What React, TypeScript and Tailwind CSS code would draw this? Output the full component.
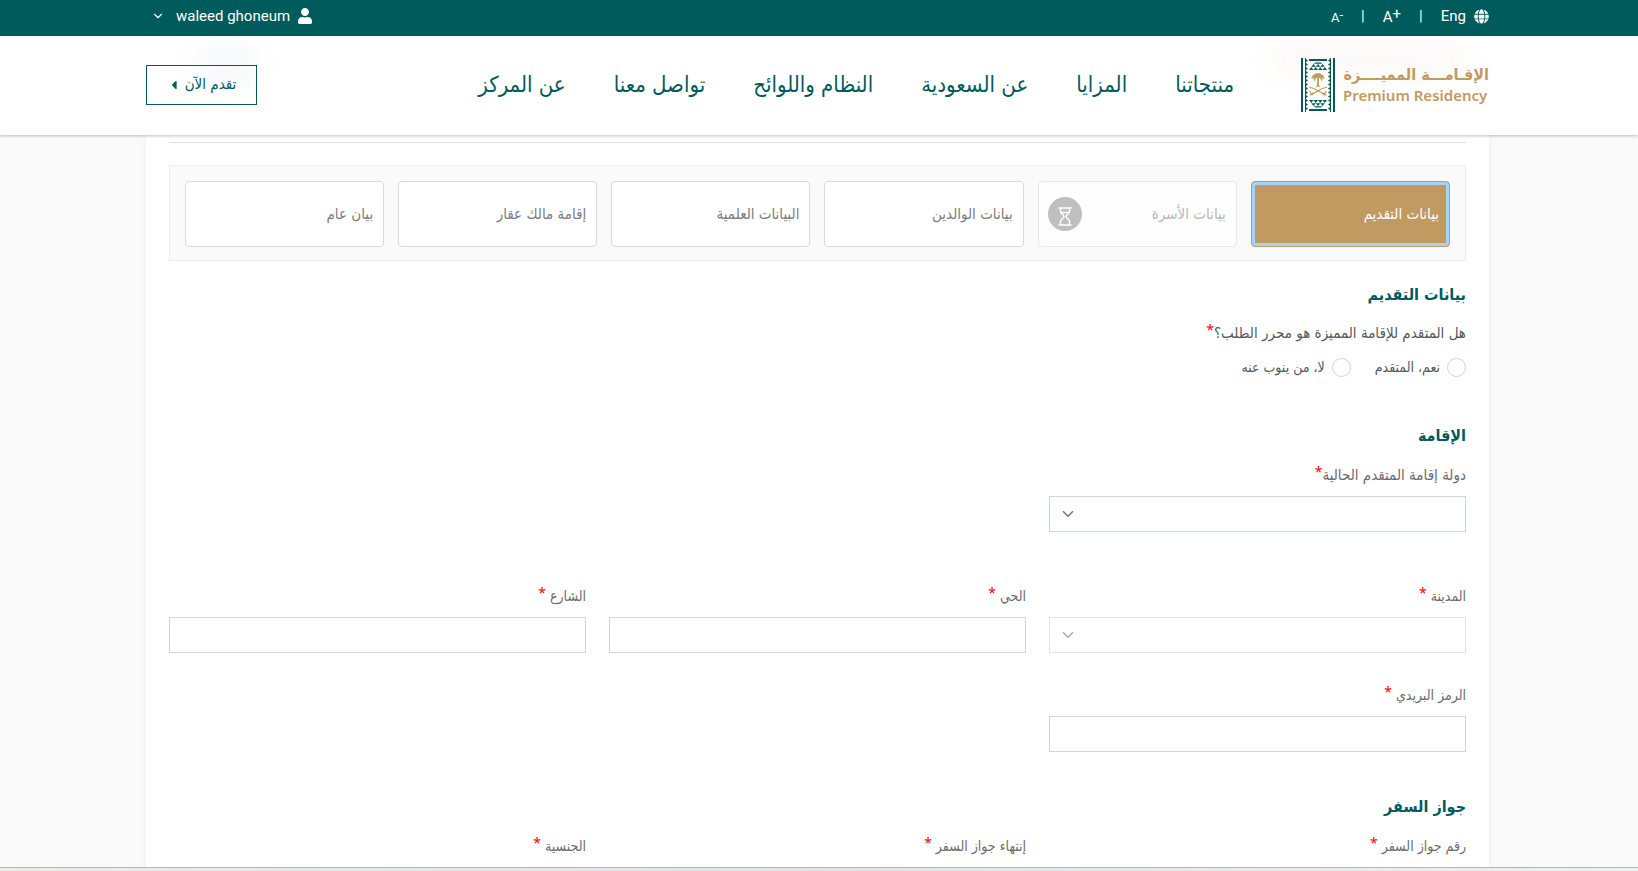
import React from "react";
import { ChevronDown } from "lucide-react";
import { FaGlobe, FaUser, FaCaretLeft } from "react-icons/fa";

const navLinks = [
  "منتجاتنا",
  "المزايا",
  "عن السعودية",
  "النظام واللوائح",
  "تواصل معنا",
  "عن المركز",
];

const steps = [
  { title: "بيانات التقديم", state: "active" },
  { title: "بيانات الأسرة", state: "pending" },
  { title: "بيانات الوالدين", state: "idle" },
  { title: "البيانات العلمية", state: "idle" },
  { title: "إقامة مالك عقار", state: "idle" },
  { title: "بيان عام", state: "idle" },
];

const stepStyles: Record<string, string> = {
  active:
    "border-[#c19a62] bg-[#c19a62] text-white shadow-[inset_0_0_0_3px_#a5d3f7]",
  pending: "border-[#e8e8e8] bg-[#fdfdfd] text-[#b8b8b8]",
  idle: "border-[#dadada] bg-white text-[#7c7c7c]",
};

const teeth = Array.from({ length: 13 }, (_, i) => 1 + i * 4);

function Triangles() {
  return (
    <path d="M8 12l2.3-3 2.2 3zM12.5 12l2.2-3 2.3 3zM17 12l2.3-3 2.2 3zM21.5 12l2.3-3 2.2 3zM10.3 8.8l2.2-2.8 2.3 2.8zM14.8 8.8l2.2-2.8 2.3 2.8zM19.3 8.8l2.2-2.8 2.3 2.8zM12.5 5.8l2-1.3h5l2 1.3z" />
  );
}

function Emblem() {
  return (
    <svg width="34" height="54" viewBox="0 0 34 54" aria-hidden="true">
      <g fill="#005b5c">
        <rect x="0" y="0" width="2" height="54" />
        <rect x="32" y="0" width="2" height="54" />
        <rect x="4" y="0" width="1" height="54" />
        <rect x="29" y="0" width="1" height="54" />
        {teeth.map((y) => (
          <React.Fragment key={y}>
            <path d={`M5 ${y}l2 1.5l-2 1.5z`} />
            <path d={`M29 ${y}l-2 1.5l2 1.5z`} />
          </React.Fragment>
        ))}
        <rect x="8" y="1" width="18" height="2" />
        <rect x="8" y="51" width="18" height="2" />
        <Triangles />
        <g transform="matrix(1 0 0 -1 0 54)">
          <Triangles />
        </g>
      </g>
      {/* palm over crossed swords */}
      <path
        fill="#c19a62"
        d="M17 15.500c1.500-.8 3 0 3.400 1 1.300 0 2.300 1 2.200 2 .9.600 1.100 2 .2 3.200 0-1.200-.7-1.900-1.400-2.100.3 1.500-.2 3-1.400 4 .2-1.700-.4-3-1.400-3.800l-.7 0v8h1.100v1h-4v-1h1.100v-8l-.7 0c-1 .8-1.600 2.100-1.400 3.800-1.200-1-1.700-2.500-1.400-4-.7.200-1.400.9-1.400 2.100-.9-1.200-.7-2.600.2-3.200-.1-1 .9-2 2.200-2 .4-1 1.900-1.800 3.400-1z"
      />
      <g stroke="#c19a62" fill="none" strokeLinecap="round" strokeWidth="1.200">
        <path d="M8.500 29.500c5 .3 9 3 14.500 7M25.500 29.500c-5 .3-9 3-14.500 7" />
        <path d="M9 33.500l2 3.500M25 33.500l-2 3.500M9 37l3-2M25 37l-3-2" />
      </g>
    </svg>
  );
}

function Hourglass() {
  return (
    <svg
      width="14"
      height="19"
      viewBox="0 0 14 19"
      fill="none"
      stroke="#fff"
      strokeWidth="1.5"
      aria-hidden="true"
    >
      <path d="M.5 1h13M.5 18h13M2.500 1v3.500c0 2.500 3.500 3.300 3.500 5s-3.500 2.500-3.500 5V18M11.500 1v3.500c0 2.500-3.500 3.300-3.500 5s3.500 2.500 3.500 5V18M3 5.500h8" />
    </svg>
  );
}

function TopBar() {
  return (
    <div className="bg-[#005b5c] font-['Roboto',sans-serif] text-white">
      <div className="ml-[146px] mr-[149px] flex h-9 items-center justify-between pb-1">
        <div className="flex items-center gap-[18px] text-[15px]">
          <button className="flex items-center gap-2">
            <FaGlobe className="size-[15px]" />
            Eng
          </button>
          <span>|</span>
          <button dir="ltr">
            A<span className="align-[3px]">+</span>
          </button>
          <span>|</span>
          <button dir="ltr" className="text-[13px]">
            A<span className="align-[3px]">-</span>
          </button>
        </div>
        <button className="flex items-center gap-[7px] pe-[5px] text-[15px]">
          <FaUser className="size-4" />
          <span>waleed ghoneum</span>
          <ChevronDown className="ms-1 size-[14px]" strokeWidth={2} />
        </button>
      </div>
    </div>
  );
}

function Header() {
  return (
    <header className="relative overflow-hidden bg-white shadow-[0_1px_3px_rgba(0,0,0,0.25)]">
      <div className="absolute left-[200px] top-4 h-6 w-[54px] rounded-full bg-gray-200/60 blur-lg" />
      <div className="absolute right-[175px] top-3 h-5 w-[190px] rounded-full bg-[#f7f3ec]/80 blur-lg" />
      <div className="relative ml-[146px] mr-[149px] flex h-[99px] items-center pb-[2px]">
        <a href="#home" className="flex shrink-0 flex-row-reverse items-center gap-2">
          <Emblem />
          <span className="flex w-[146px] flex-col whitespace-nowrap text-[#c19a62]">
            <span className="text-base font-bold leading-5">
              الإقـامـــة المميــــزة
            </span>
            <span
              dir="ltr"
              className="font-['Noto_Sans',sans-serif] text-[15px] font-semibold leading-5"
            >
              Premium Residency
            </span>
          </span>
        </a>
        <nav className="ms-[67px] flex gap-12 whitespace-nowrap text-[22px] text-[#005b5c]">
          {navLinks.map((link) => (
            <a key={link} href="#nav">
              {link}
            </a>
          ))}
        </nav>
        <button className="ms-auto flex h-10 w-[111px] items-center justify-center gap-1 border border-[#005b5c] text-[15px] text-[#005b5c]">
          <span>تقدم الآن</span>
          <FaCaretLeft className="size-[14px]" />
        </button>
      </div>
    </header>
  );
}

function Steps() {
  return (
    <div className="flex gap-[14px] border border-[#eeeeee] bg-[#fafafa] px-[15px] pb-[13px] pt-[15px]">
      {steps.map((step) => (
        <button
          key={step.title}
          className={`flex h-[66px] flex-1 items-center justify-between rounded border pe-[9px] ps-[10px] text-[15px] ${stepStyles[step.state]}`}
        >
          <span>{step.title}</span>
          {step.state === "pending" && (
            <span className="flex size-[34px] items-center justify-center rounded-full bg-[#bfbfbf] pt-1">
              <Hourglass />
            </span>
          )}
        </button>
      ))}
    </div>
  );
}

function Title({ children }: { children: React.ReactNode }) {
  return (
    <h2 className="text-base font-bold leading-6 text-[#005b5c]">{children}</h2>
  );
}

function Star() {
  return (
    <span className="align-[3px] font-['Noto_Sans',sans-serif] text-sm leading-4 text-[#ff0000]">
      *
    </span>
  );
}

type FieldProps = {
  id: string;
  label: string;
  kind?: "select" | "input";
  disabled?: boolean;
  wide?: boolean;
};

function Field({ id, label, kind = "input", disabled, wide }: FieldProps) {
  return (
    <div className="flex flex-col gap-[9px]">
      <label
        htmlFor={id}
        className={`leading-6 text-[#6c6c6c] ${wide ? "text-[15px]" : "text-sm"}`}
      >
        {label}
        {!wide && " "}
        <Star />
      </label>
      {kind === "input" && (
        <input id={id} className="h-9 w-full border border-[#d4d4d4] px-3" />
      )}
      {kind === "select" && (
        <div className={disabled ? "relative opacity-60" : "relative"}>
          <select
            id={id}
            disabled={disabled}
            className="block h-9 w-full appearance-none border border-[#ced4da] bg-white px-3"
          />
          <ChevronDown
            className="pointer-events-none absolute left-[10px] top-[9px] size-[18px] text-[#6c757d]"
            strokeWidth={2}
          />
        </div>
      )}
    </div>
  );
}

export default function App() {
  const [applicant, setApplicant] = React.useState("");

  return (
    <div
      dir="rtl"
      className="relative h-screen overflow-hidden bg-[#fafafa] font-['DejaVu_Sans_Condensed','DejaVu_Sans',sans-serif]"
    >
      <TopBar />
      <Header />

      <main className="ml-[146px] mr-[149px] min-h-screen bg-white px-[23px] pt-[7px] shadow-[0_0_6px_rgba(0,0,0,0.06)]">
        <hr className="mb-[22px] border-[#dee2e6]" />
        <Steps />

        <section className="mt-[22px]">
          <Title>بيانات التقديم</Title>
          <fieldset className="mt-[14px]">
            <legend className="text-[15px] leading-6 text-[#55595c]">
              هل المتقدم للإقامة المميزة هو محرر الطلب؟
              <Star />
            </legend>
            <div className="mt-3 flex gap-6 text-sm leading-5 text-[#55595c]">
              {["نعم، المتقدم", "لا، من ينوب عنه"].map((option) => (
                <label key={option} className="flex items-center gap-[7px]">
                  <input
                    type="radio"
                    name="applicant"
                    checked={applicant === option}
                    onChange={() => setApplicant(option)}
                    className="size-[19px] appearance-none rounded-full border border-[#ced4da] bg-white checked:border-4 checked:border-[#005b5c]"
                  />
                  {option}
                </label>
              ))}
            </div>
          </fieldset>
        </section>

        <section className="mt-[47px]">
          <Title>الإقامة</Title>
          <div className="mt-[15px] grid grid-cols-3 gap-x-[23px]">
            <Field id="country" label="دولة إقامة المتقدم الحالية" kind="select" wide />
          </div>
          <div className="mt-[52px] grid grid-cols-3 gap-x-[23px] gap-y-[30px]">
            <Field id="city" label="المدينة" kind="select" disabled />
            <Field id="district" label="الحي" />
            <Field id="street" label="الشارع" />
            <Field id="postal" label="الرمز البريدي" />
          </div>
        </section>

        <section className="mt-[43px]">
          <Title>جواز السفر</Title>
          <div className="mt-[15px] grid grid-cols-3 gap-x-[23px]">
            <Field id="passport" label="رقم جواز السفر" />
            <Field id="expiry" label="إنتهاء جواز السفر" />
            <Field id="nationality" label="الجنسية" />
          </div>
        </section>
      </main>

      <div className="absolute inset-x-0 bottom-0 h-1 border-t border-[#b5b5b5] bg-linear-to-r from-[#eeeaea] via-[#dde6ea] to-[#eef0ef]" />
    </div>
  );
}
